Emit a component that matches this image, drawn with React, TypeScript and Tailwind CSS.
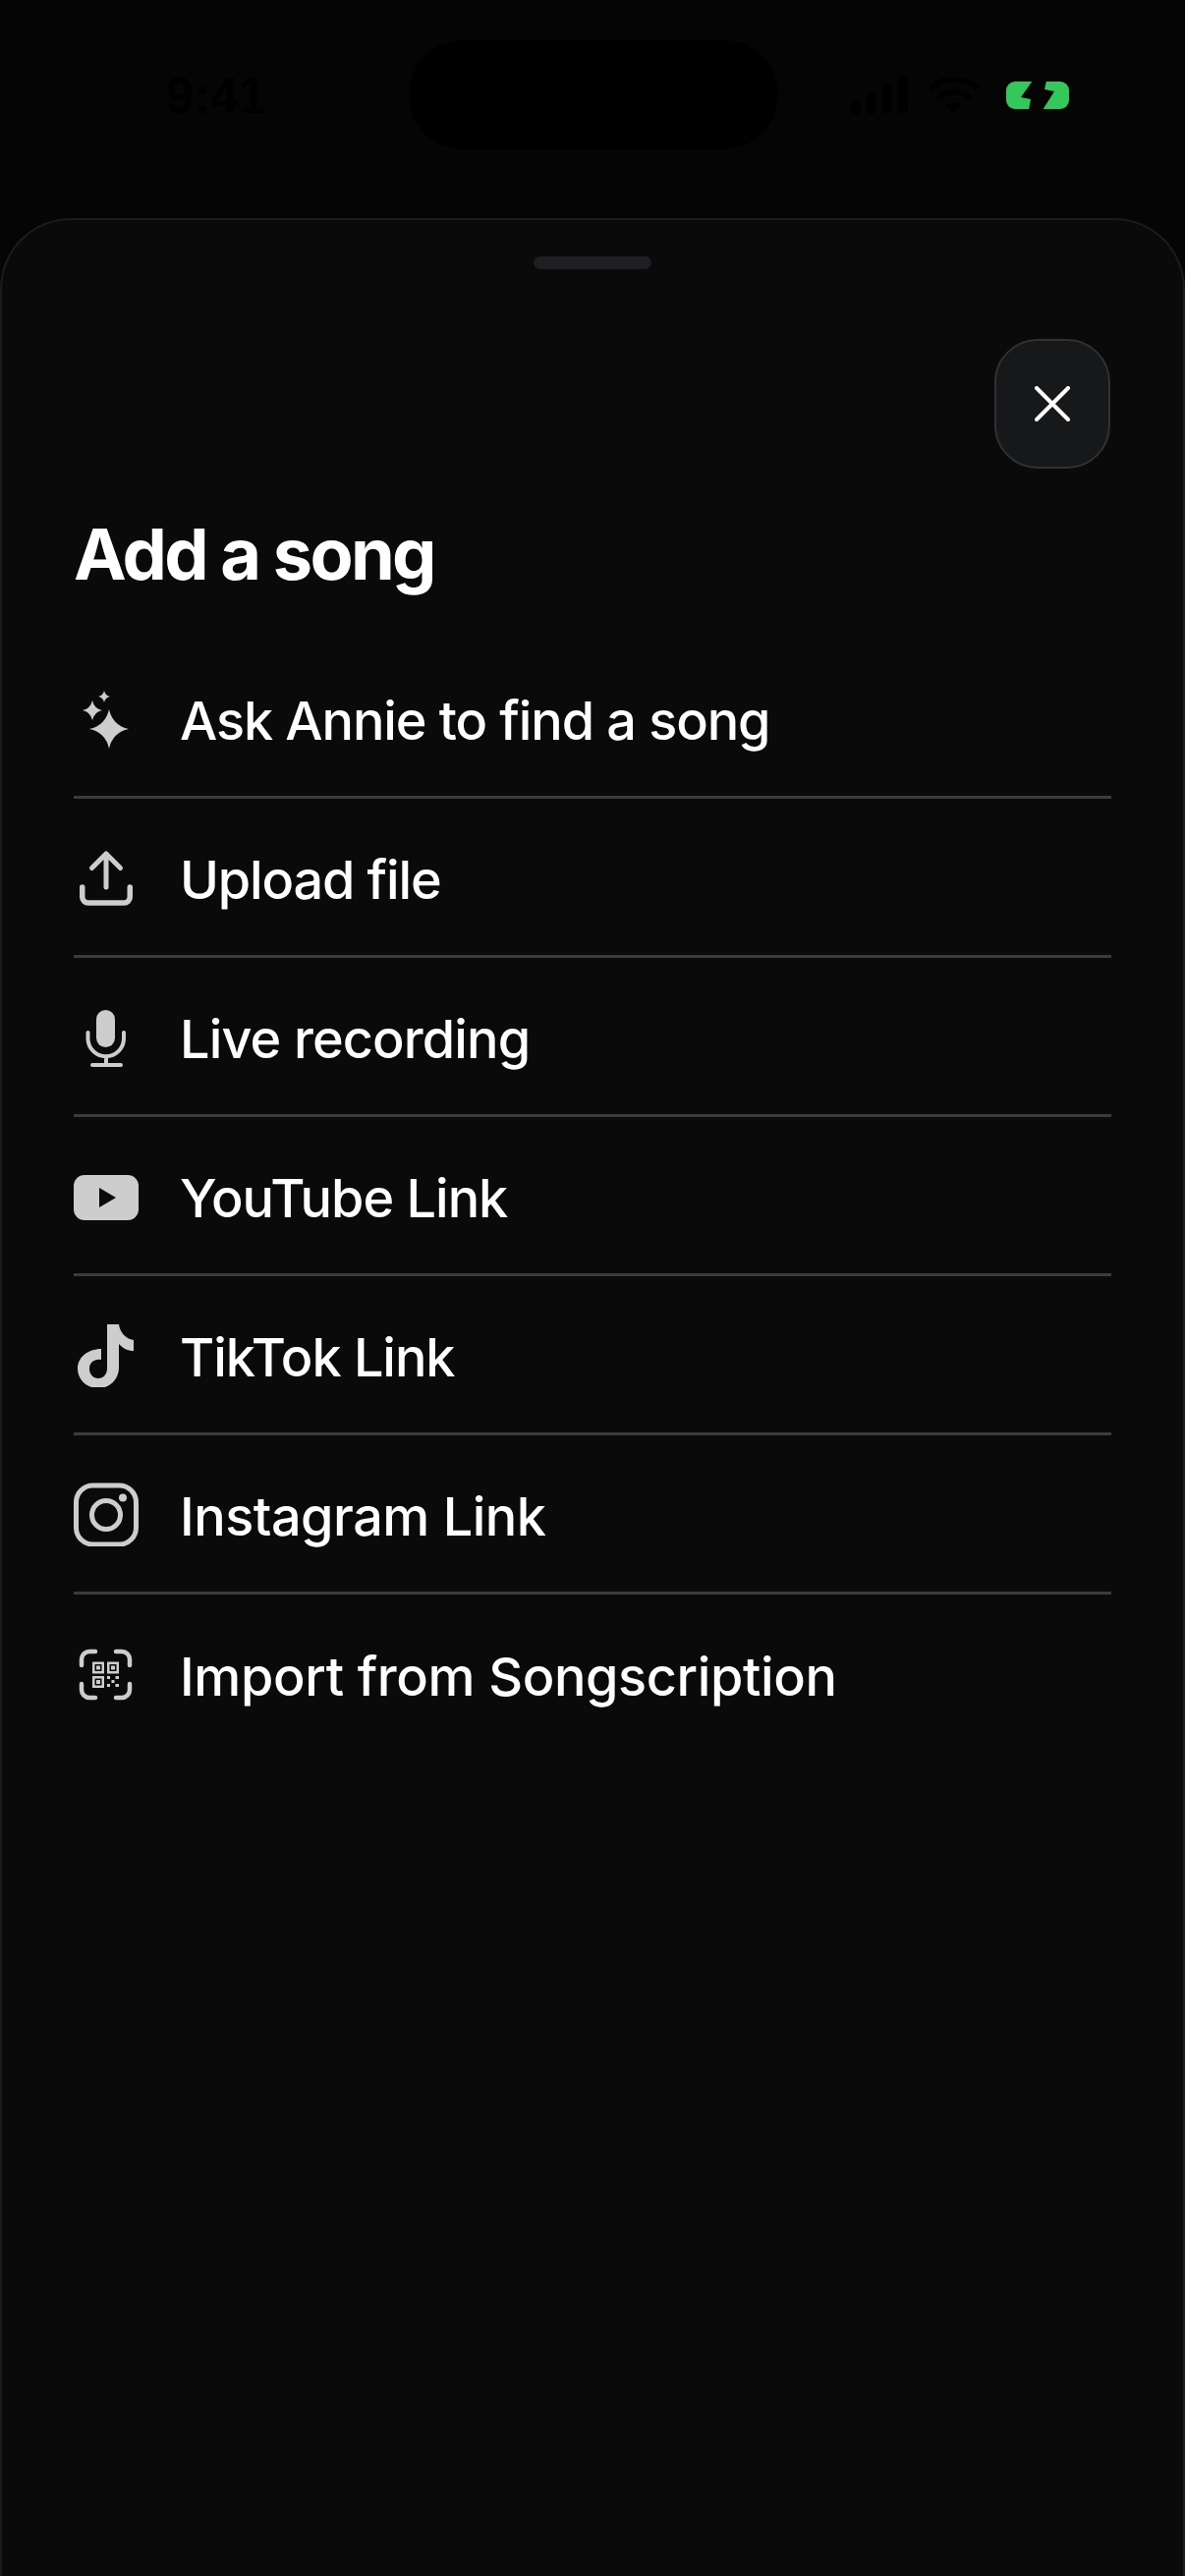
const ROWS = [
  { label: "Ask Annie to find a song", tracking: "tracking-[-1.1px]", icon: <SparklesIcon /> },
  { label: "Upload file", tracking: "tracking-[-1.15px]", icon: <UploadIcon /> },
  { label: "Live recording", tracking: "tracking-[-0.87px]", icon: <MicIcon /> },
  { label: "YouTube Link", tracking: "tracking-[-1px]", icon: <YoutubeIcon /> },
  { label: "TikTok Link", tracking: "tracking-[-1.05px]", icon: <TiktokIcon /> },
  { label: "Instagram Link", tracking: "tracking-[-0.5px]", icon: <InstagramIcon /> },
  { label: "Import from Songscription", tracking: "tracking-[-0.37px]", icon: <ScanIcon /> },
];

function star(cx: number, cy: number, r: number) {
  const k = r * 0.18;
  return `M${cx} ${cy - r}Q${cx + k} ${cy - k} ${cx + r} ${cy}Q${cx + k} ${cy + k} ${cx} ${cy + r}Q${cx - k} ${cy + k} ${cx - r} ${cy}Q${cx - k} ${cy - k} ${cx} ${cy - r}Z`;
}

function SparklesIcon() {
  return (
    <svg viewBox="0 0 66 66" className="h-[66px] w-[66px]" fill="#cdcdcd">
      <path d={star(36, 44, 20)} />
      <path d={star(19, 25, 10)} />
      <path d={star(31, 11, 6)} />
    </svg>
  );
}

function UploadIcon() {
  return (
    <svg viewBox="0 0 66 66" className="h-[66px] w-[66px]" fill="none" stroke="#cdcdcd" strokeLinecap="round" strokeLinejoin="round">
      <path d="M8.75 43v10a6 6 0 0 0 6 6h36.5a6 6 0 0 0 6-6V43" strokeWidth="5.5" />
      <path d="M33 43V9M18.5 23.5L33 9l14.5 14.5" strokeWidth="5" />
    </svg>
  );
}

function MicIcon() {
  return (
    <svg viewBox="0 0 66 66" className="h-[66px] w-[66px]" fill="none" stroke="#cdcdcd" strokeWidth="4" strokeLinecap="round">
      <rect x="23" y="6" width="19" height="38" rx="9.5" fill="#cdcdcd" stroke="none" />
      <path d="M14.5 29v6a18.25 18.25 0 0 0 36.5 0v-6M33 54v8M19 62h29" />
    </svg>
  );
}

function YoutubeIcon() {
  return (
    <svg viewBox="0 0 66 66" className="h-[66px] w-[66px]">
      <rect x="0" y="12" width="66" height="46" rx="11" fill="#cdcdcd" />
      <path d="M26 25l17 10-17 10z" fill="#0a0a0a" />
    </svg>
  );
}

function TiktokIcon() {
  return (
    <svg viewBox="0 0 66 66" className="h-[66px] w-[66px]" fill="#cdcdcd">
      <path d="M34 2H46C47 10 53 17 61 18V29C55 29 50 26.5 46 22V46C46 58 37 67 25 67C13 67 4 58 4 47C4 36 14 27 28 27V38C21 37 16 41 16 47C16 53 20 57 25 57C30 57 34 53 34 47Z" />
    </svg>
  );
}

function InstagramIcon() {
  return (
    <svg viewBox="0 0 66 66" className="h-[66px] w-[66px]" fill="none" stroke="#cdcdcd" strokeWidth="5">
      <rect x="2.5" y="4" width="61" height="60" rx="17" />
      <circle cx="33" cy="34" r="14.5" />
      <circle cx="50" cy="16.5" r="4" fill="#cdcdcd" stroke="none" />
    </svg>
  );
}

function ScanIcon() {
  return (
    <svg viewBox="0 0 66 66" className="h-[66px] w-[66px]" fill="none" stroke="#cdcdcd" strokeWidth="4.5" strokeLinecap="round">
      <path d="M22 10h-6a8 8 0 0 0-8 8v6M43 10h6a8 8 0 0 1 8 8v6M22 57h-6a8 8 0 0 1-8-8v-6M43 57h6a8 8 0 0 0 8-8v-6" />
      <g strokeWidth="2.5" strokeLinecap="butt">
        <rect x="20.25" y="21.75" width="9.5" height="9.5" />
        <rect x="35.25" y="21.75" width="9.5" height="9.5" />
        <rect x="20.25" y="36.25" width="9.5" height="9.5" />
      </g>
      <g fill="#cdcdcd" stroke="none">
        <rect x="23" y="24.5" width="4" height="4" />
        <rect x="38" y="24.5" width="4" height="4" />
        <rect x="23" y="39" width="4" height="4" />
        <rect x="34" y="35" width="3" height="3" />
        <rect x="42.5" y="35" width="3.5" height="3" />
        <rect x="38.5" y="39" width="3" height="3" />
        <rect x="34" y="43" width="3" height="3" />
        <rect x="42.5" y="43" width="3.5" height="3" />
      </g>
    </svg>
  );
}

function StatusIcons() {
  return (
    <div className="flex items-center">
      <svg viewBox="0 0 58 38" className="h-[38px] w-[58px]" fill="#000000">
        <rect x="0" y="24" width="10" height="14" rx="4" />
        <rect x="16" y="16" width="10" height="22" rx="4" />
        <rect x="32" y="8" width="10" height="30" rx="4" />
        <rect x="48" y="0" width="10" height="38" rx="4" />
      </svg>
      <svg viewBox="0 0 50 37" className="ml-[22px] h-[37px] w-[50px]" fill="none" stroke="#000000" strokeWidth="5.5">
        <path d="M1 12C13 -2 37 -2 49 12" />
        <path d="M8 22C17 12 33 12 42 22" />
        <path d="M17 28C21 25 29 25 33 28L25 37Z" fill="#000000" stroke="none" />
      </svg>
      <svg viewBox="0 0 64 28" className="ml-[28px] h-[28px] w-[64px]">
        <rect x="0" y="0" width="64" height="28" rx="9" fill="#34c759" />
        <path d="M27 -1L15 16L25 18L23 29H37L49 10L39 8L41 -1Z" fill="#050505" />
      </svg>
    </div>
  );
}

export default function App() {
  return (
    <div className="flex min-h-[2622px] w-[1206px] flex-col bg-[#050505] font-['Inter',sans-serif] text-white">
      {/* status bar, dark on dark like the capture */}
      <div className="flex h-[222px] shrink-0 items-start pl-[169px]">
        <span className="mt-[74px] font-['Liberation_Sans',sans-serif] text-[51px] font-bold leading-[48px] text-black">9:41</span>
        <div className="ml-[145px] mt-[41px] h-[111px] w-[376px] rounded-[56px] bg-black" />
        <div className="ml-[74px] mt-[78px]">
          <StatusIcons />
        </div>
      </div>

      <div className="flex flex-1 flex-col rounded-t-[72px] border-x-2 border-t-2 border-[#1b1c1e] bg-[#0a0a0a] px-[73px]">
        <div className="mx-auto mt-[37px] h-[13px] w-[120px] rounded-full bg-[#1e1f22]" />
        <div className="mr-[1px] mt-[71px] flex justify-end">
          <button className="flex h-[132px] w-[118px] items-center justify-center rounded-[44px] border-2 border-[#2f3133] bg-[#16181a]">
            <svg viewBox="0 0 36 36" className="h-[36px] w-[36px]" fill="none" stroke="#ffffff" strokeWidth="4" strokeLinecap="round">
              <path d="M2 2l32 32M34 2L2 34" />
            </svg>
          </button>
        </div>
        <h1 className="mt-[44px] text-[72px] font-bold leading-[86px] tracking-[-0.037em]">Add a song</h1>
        <ul className="mt-[44px]">
          {ROWS.map((row, i) => (
            <li
              key={row.label}
              className={`flex h-[162px] items-center gap-[42px] ${i < ROWS.length - 1 ? "border-b-[3px] border-[#3c3c3c]" : ""}`}
            >
              {row.icon}
              <span className={`pt-[6px] text-[54px] font-[450] leading-[64px] ${row.tracking}`}>{row.label}</span>
            </li>
          ))}
        </ul>
      </div>
    </div>
  );
}
